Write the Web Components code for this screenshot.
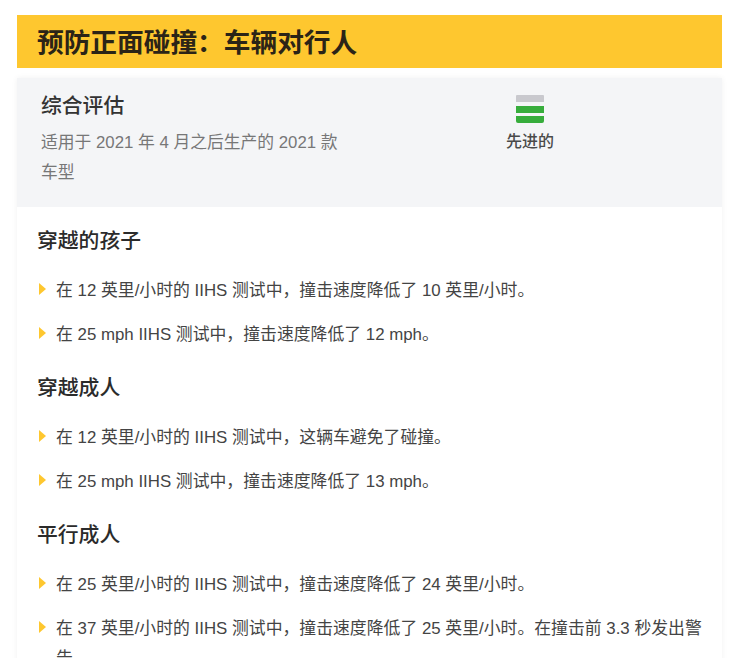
<!DOCTYPE html>
<html lang="zh">
<head>
<meta charset="utf-8">
<style>
  html, body { margin: 0; height: 658px; overflow: hidden; background: #fff; }
  body { font-family: "Liberation Sans", "Noto Sans CJK SC", sans-serif; color: #333; }
</style>
</head>
<body>
<template id="rating-report-tpl">
  <style>
    :host { display: block; padding: 15px 22px 0 17px; }
    .title {
      margin: 0; height: 53px; line-height: 57px; padding-left: 20px;
      background: #fec72f; color: #2b2417; font-size: 26.7px; font-weight: 700;
    }
    .body { margin-top: 10px; box-shadow: 0 0 6px rgba(0,0,0,.06); }
  </style>
  <h1 class="title"><slot name="title"></slot></h1>
  <div class="body"><slot></slot></div>
</template>

<template id="overall-rating-tpl">
  <style>
    :host { display: flex; height: 129px; box-sizing: border-box; padding: 14px 0 0 24px; background: #f4f5f7; }
    .text { width: 305px; }
    h2 { margin: 0; font-size: 20.8px; line-height: 28px; font-weight: 500; color: #333; }
    p { margin: 8px 0 0; font-size: 16.8px; line-height: 30px; color: #777; }
    .score { margin-left: 154px; width: 60px; display: flex; flex-direction: column; align-items: center; padding-top: 3px; }
    svg { display: block; }
    span { margin-top: 8px; font-size: 16px; line-height: 22px; font-weight: 500; color: #4a4a4a; }
  </style>
  <div class="text">
    <h2><slot name="heading"></slot></h2>
    <p><slot></slot></p>
  </div>
  <div class="score">
    <svg width="28" height="28" viewBox="0 0 28 28">
      <path d="M0 1a1 1 0 0 1 1-1h26a1 1 0 0 1 1 1v6H0z" fill="#c9c9ce"/>
      <rect y="11" width="28" height="7" fill="#37ad3c"/>
      <path d="M0 21h28v5a2 2 0 0 1-2 2H2a2 2 0 0 1-2-2z" fill="#37ad3c"/>
    </svg>
    <span><slot name="score"></slot></span>
  </div>
</template>

<template id="test-group-tpl">
  <style>
    :host { display: block; padding: 0 18px 18px 20px; }
    h3 { margin: 0 0 11px; font-size: 20.8px; line-height: 30px; font-weight: 500; color: #2b2b2b; }
  </style>
  <h3><slot name="heading"></slot></h3>
  <slot></slot>
</template>

<template id="test-item-tpl">
  <style>
    :host { display: block; position: relative; padding: 9px 0 5px 19px; font-size: 16.85px; line-height: 30px; color: #444; }
    :host::before {
      content: ""; position: absolute; left: 2px; top: 16px;
      border-left: 7px solid #fec72f; border-top: 6px solid transparent; border-bottom: 6px solid transparent;
    }
  </style>
  <slot></slot>
</template>

<rating-report>
  <span slot="title">预防正面碰撞&#xFF1A;车辆对行人</span>
  <overall-rating>
    <span slot="heading">综合评估</span>
    适用于 2021 年 4 月之后生产的 2021 款车型
    <span slot="score">先进的</span>
  </overall-rating>
  <div style="background:#fff;padding-top:19px">
    <test-group>
      <span slot="heading">穿越的孩子</span>
      <test-item>在 12 英里/小时的 IIHS 测试中&#xFF0C;撞击速度降低了 10 英里/小时。</test-item>
      <test-item>在 25 mph IIHS 测试中&#xFF0C;撞击速度降低了 12 mph。</test-item>
    </test-group>
    <test-group>
      <span slot="heading">穿越成人</span>
      <test-item>在 12 英里/小时的 IIHS 测试中&#xFF0C;这辆车避免了碰撞。</test-item>
      <test-item>在 25 mph IIHS 测试中&#xFF0C;撞击速度降低了 13 mph。</test-item>
    </test-group>
    <test-group>
      <span slot="heading">平行成人</span>
      <test-item>在 25 英里/小时的 IIHS 测试中&#xFF0C;撞击速度降低了 24 英里/小时。</test-item>
      <test-item>在 37 英里/小时的 IIHS 测试中&#xFF0C;撞击速度降低了 25 英里/小时。在撞击前 3.3 秒发出警告</test-item>
    </test-group>
  </div>
</rating-report>
<script>
  class TemplatedElement extends HTMLElement {
    constructor() {
      super();
      const tpl = document.getElementById(this.constructor.tpl);
      this.attachShadow({ mode: "open" }).appendChild(tpl.content.cloneNode(true));
    }
  }
  class RatingReport extends TemplatedElement { static tpl = "rating-report-tpl"; }
  class OverallRating extends TemplatedElement { static tpl = "overall-rating-tpl"; }
  class TestGroup extends TemplatedElement { static tpl = "test-group-tpl"; }
  class TestItem extends TemplatedElement { static tpl = "test-item-tpl"; }
  customElements.define("rating-report", RatingReport);
  customElements.define("overall-rating", OverallRating);
  customElements.define("test-group", TestGroup);
  customElements.define("test-item", TestItem);
</script>
</body>
</html>
